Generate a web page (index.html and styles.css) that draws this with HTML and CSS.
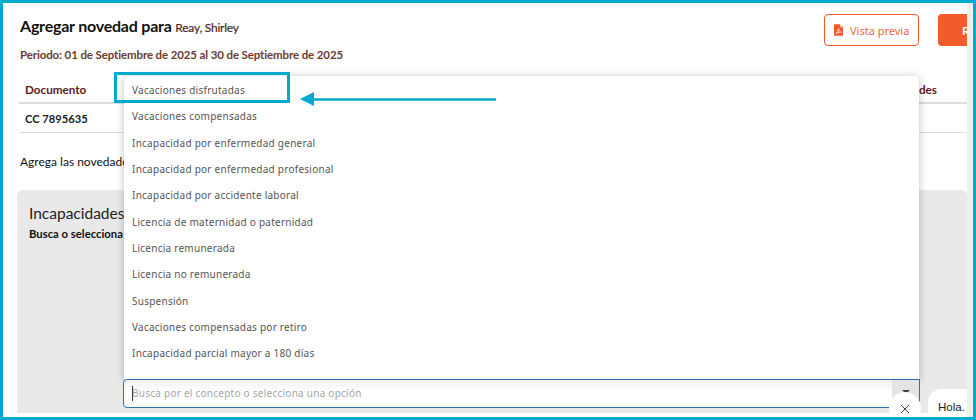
FILE: index.html
```html
<!DOCTYPE html>
<html lang="es">
<head>
<meta charset="utf-8">
<title>Agregar novedad</title>
<link rel="stylesheet" href="styles.css">
</head>
<body>
<div class="frame">
  <main class="main">
    <header class="top">
      <div class="heading">
        <h1 class="title">Agregar novedad para <span class="name">Reay, Shirley</span></h1>
        <p class="period">Periodo: 01 de Septiembre de 2025 al 30 de Septiembre de 2025</p>
      </div>
      <div class="actions">
        <button class="btn-outline">
          <svg class="pdf" width="9" height="12" viewBox="0 0 10 13"><path d="M0 0h6.5L10 3.5V13H0z" fill="#ee5a2c"/><path d="M6.5 0v3.5H10z" fill="#f9c4b0"/><path d="M2 10.5C4 9 5 6.5 4.8 5c.4 2 1.4 3.4 3.4 3.9-2-.2-4.200.5-6.200 1.600z" fill="none" stroke="#fff" stroke-width=".8"/></svg>
          Vista previa
        </button>
        <button class="btn-solid">Reportar</button>
      </div>
    </header>
    <div class="table">
      <div class="row head"><span>Documento</span><span>Novedades</span></div>
      <div class="row cell"><span>CC 7895635</span></div>
    </div>
    <p class="intro">Agrega las novedades</p>
    <section class="panel">
      <h2 class="panel-title">Incapacidades</h2>
      <p class="panel-sub">Busca o selecciona</p>
    </section>
  </main>
  <div class="scrollbar"></div>

  <div class="combo">
    <ul class="menu">
      <li>Vacaciones disfrutadas</li>
      <li>Vacaciones compensadas</li>
      <li>Incapacidad por enfermedad general</li>
      <li>Incapacidad por enfermedad profesional</li>
      <li>Incapacidad por accidente laboral</li>
      <li>Licencia de maternidad o paternidad</li>
      <li>Licencia remunerada</li>
      <li>Licencia no remunerada</li>
      <li>Suspensión</li>
      <li>Vacaciones compensadas por retiro</li>
      <li>Incapacidad parcial mayor a 180 días</li>
    </ul>
    <div class="field">
      <span class="caret"></span><span class="placeholder">Busca por el concepto o selecciona una opción</span>
      <span class="toggle"><i class="tri"></i></span>
    </div>
  </div>

  <div class="mark"></div>
  <svg class="arrow" width="200" height="16" viewBox="0 0 200 16"><path d="M197 8.500H14" stroke="#00a9ce" stroke-width="2.500" fill="none"/><path d="M1 8 15 1v14z" fill="#00a9ce"/></svg>

  <div class="chat-close"><svg width="10" height="10" viewBox="0 0 10 10"><path d="M1 1l8 8M9 1l-8 8" stroke="#444" stroke-width="1" fill="none"/></svg></div>
  <div class="chat-bubble">Hola.</div>
</div>
</body>
</html>
```
FILE: styles.css
```css
* { box-sizing: border-box; }
html, body { margin: 0; padding: 0; background: #fff; }
.frame {
  position: relative;
  display: flex;
  width: 976px;
  height: 420px;
  border: 3px solid #00a9ce;
  overflow: hidden;
  font-family: Lato, "Liberation Sans", sans-serif;
  color: #222;
}
.main { flex: 1; min-width: 0; padding: 0 0 0 14px; overflow: hidden; }
.scrollbar { width: 6px; background: #efefef; }
.top { display: flex; justify-content: space-between; align-items: flex-start; padding-top: 11px; }
.heading { padding-left: 3px; }
.title { margin: 0; font-size: 16px; line-height: 24px; font-weight: 700; color: #111; letter-spacing: -.22px; }
.name { margin-left: 0; font-size: 12px; font-weight: 400; color: #4a2a2a; -webkit-text-stroke: .2px #4a2a2a; }
.period { margin: 7px 0 0; font-size: 11.500px; line-height: 16px; font-weight: 700; color: #6b3a30; letter-spacing: -.12px; }
.actions { display: flex; gap: 19px; width: 143px; overflow: hidden; flex: none; }
.btn-outline {
  display: flex; align-items: center; gap: 7px; flex: none;
  width: 95px; height: 32px; padding: 0 0 0 9px;
  background: #fff; border: 1px solid #ee5a2c; border-radius: 4px;
  color: #ee6a40; font: 400 11px "Noto Sans", sans-serif;
}
.btn-solid {
  flex: none; width: 90px; height: 32px; padding: 0 0 0 24px; text-align: left;
  background: #f25c2a; border: 0; border-radius: 4px;
  color: #fff; font: 700 12px Lato, sans-serif;
}
.table { margin: 12px 0 0 2px; }
.row {
  display: flex; justify-content: space-between; align-items: center;
  height: 29px; padding: 0 30px 0 6px;
  font-size: 11.700px; font-weight: 700; color: #222;
  border-bottom: 1px solid #ddd;
}
.cell { font-size: 11.200px; }
.head { height: 29px; color: #5a2024; border-bottom: 2px solid #ddd; }
.intro { margin: 21px 0 0 3px; font-size: 12px; line-height: 16px; color: #111; }
.panel {
  margin-top: 20px; height: 223px; padding: 14px 12px;
  background: #e9e9e9; border-radius: 6px 6px 0 0;
}
.panel-title { margin: 0; font-size: 15.500px; line-height: 18px; font-weight: 400; color: #222; }
.panel-sub { margin: 4px 0 0; font-size: 11.300px; line-height: 15px; font-weight: 700; color: #111; }
.combo { position: absolute; left: 120px; top: 73px; width: 797px; }
.menu {
  list-style: none; margin: 0 0 0 1px; padding: 1px 0 12px; width: 795px;
  background: #fff; border-radius: 4px 4px 0 0;
  box-shadow: 0 1px 8px rgba(0,0,0,.25);
  font: 400 10px/26.350px "Noto Sans", sans-serif; color: #555; letter-spacing: .25px;
}
.menu li { padding-left: 8px; }
.field {
  position: relative; height: 29px; display: flex; align-items: center; padding-left: 8px;
  background: linear-gradient(#f1f1f1, #fff 12px);
  border: 1px solid #2a6fb0; border-radius: 0 0 4px 4px;
  border-top-left-radius: 4px;
  font: 400 10px "Noto Sans", sans-serif; letter-spacing: .25px; color: #a5a5a5;
}
.caret { width: 1px; height: 15px; background: #333; margin-right: -1px; }
.toggle { position: absolute; right: 0; top: 0; bottom: 0; width: 27px; background: #e4e4e4; display: flex; justify-content: center; padding-top: 10px; }
.tri { width: 0; height: 0; border: 4px solid transparent; border-top-color: #444; }
.mark { position: absolute; left: 111px; top: 69px; width: 176px; height: 31px; border: 3px solid #00a9ce; }
.arrow { position: absolute; left: 296px; top: 88px; }
.chat-close {
  position: absolute; left: 886px; top: 389px; width: 32px; height: 32px;
  display: flex; align-items: center; justify-content: center;
  background: #fff; border-radius: 50%;
  padding-top: 2px;
}
.chat-bubble {
  position: absolute; left: 925px; top: 386px; width: 39px; height: 28px;
  padding: 11px 0 0 10px;
  background: #fff; border-radius: 14px 0 0 0;
  font: 400 11.500px/14px "Liberation Sans", sans-serif; color: #222; white-space: nowrap; overflow: hidden;
}
```
